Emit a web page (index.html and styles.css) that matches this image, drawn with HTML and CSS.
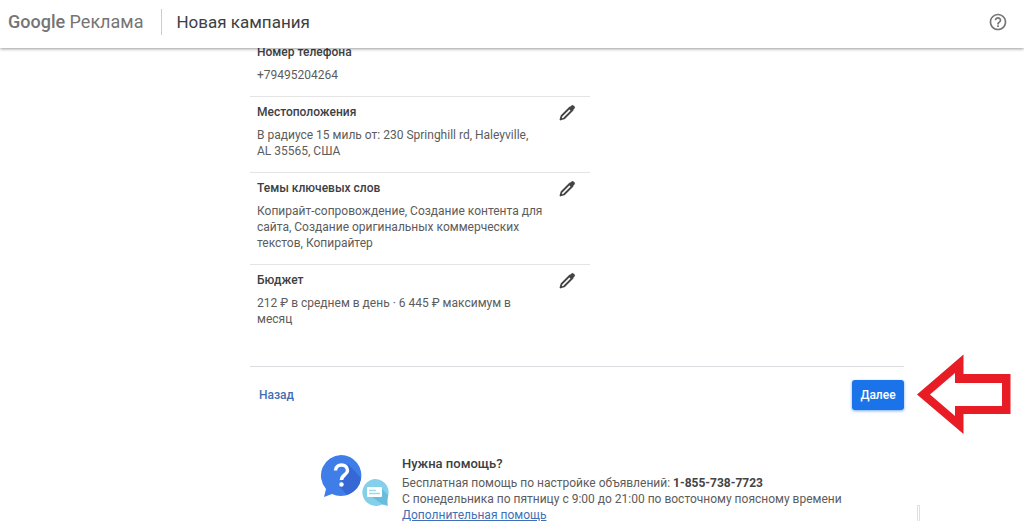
FILE: index.html
```html
<!DOCTYPE html>
<html lang="ru">
<head>
    <meta charset="UTF-8">
    <meta name="viewport" content="width=device-width, initial-scale=1.0">
    <title>Новая кампания</title>
    <link rel="stylesheet" href="styles.css">
</head>
<body>
    <header class="header">
        <a href="#" class="logo"><span class="logo-google">Google</span> Реклама</a>
        <h1 class="page-title">Новая кампания</h1>
        <button class="icon-button help-button" aria-label="Справка">
            <svg width="20" height="20" viewBox="0 0 24 24" fill="#757575"><path d="M11 18h2v-2h-2v2zm1-16C6.48 2 2 6.48 2 12s4.48 10 10 10 10-4.48 10-10S17.52 2 12 2zm0 18c-4.41 0-8-3.59-8-8s3.59-8 8-8 8 3.59 8 8-3.59 8-8 8zm0-14c-2.21 0-4 1.79-4 4h2c0-1.1.9-2 2-2s2 .9 2 2c0 2-3 1.75-3 5h2c0-2.25 3-2.5 3-5 0-2.21-1.79-4-4-4z"/></svg>
        </button>
    </header>

    <main class="main">
        <div class="summary">
            <section class="row">
                <div class="row-text">
                    <h2>Номер телефона</h2>
                    <p>+79495204264</p>
                </div>
            </section>
            <section class="row">
                <div class="row-text">
                    <h2>Местоположения</h2>
                    <p>В радиусе 15 миль от: 230 Springhill rd, Haleyville, AL 35565, США</p>
                </div>
                <button class="icon-button" aria-label="Изменить местоположения">
                    <svg width="18" height="18" viewBox="0 0 18 18"><path d="M2.500 15.500l1-3.500L12 3.500l2.500 2.500L6 14.500z" fill="none" stroke="#444" stroke-width="1.800" stroke-linejoin="round"/><path d="M10.500 4.500l3-3q1-1 2 0l1 1q1 1 0 2l-3 3z" fill="#444"/></svg>
                </button>
            </section>
            <section class="row">
                <div class="row-text">
                    <h2>Темы ключевых слов</h2>
                    <p>Копирайт-сопровождение, Создание контента для сайта, Создание оригинальных коммерческих текстов, Копирайтер</p>
                </div>
                <button class="icon-button" aria-label="Изменить темы ключевых слов">
                    <svg width="18" height="18" viewBox="0 0 18 18"><path d="M2.500 15.500l1-3.500L12 3.500l2.500 2.500L6 14.500z" fill="none" stroke="#444" stroke-width="1.800" stroke-linejoin="round"/><path d="M10.500 4.500l3-3q1-1 2 0l1 1q1 1 0 2l-3 3z" fill="#444"/></svg>
                </button>
            </section>
            <section class="row">
                <div class="row-text">
                    <h2>Бюджет</h2>
                    <p>212 ₽ в среднем в день · 6 445 ₽ максимум в месяц</p>
                </div>
                <button class="icon-button" aria-label="Изменить бюджет">
                    <svg width="18" height="18" viewBox="0 0 18 18"><path d="M2.500 15.500l1-3.500L12 3.500l2.500 2.500L6 14.500z" fill="none" stroke="#444" stroke-width="1.800" stroke-linejoin="round"/><path d="M10.500 4.500l3-3q1-1 2 0l1 1q1 1 0 2l-3 3z" fill="#444"/></svg>
                </button>
            </section>
        </div>

        <div class="actions">
            <button class="back-button">Назад</button>
            <div class="next">
                <button class="next-button">Далее</button>
                <!-- Arrow pointing at the button -->
                <svg class="arrow" width="96" height="82" viewBox="0 0 96 82"><path d="M1 40.500L47.500 0.500V20H94.500V60H47.500V80zM14 40.500L39 62V52H86V29H39V19z" fill="#e81c24" fill-rule="evenodd"/></svg>
            </div>
        </div>

        <section class="help">
            <svg class="help-icon" width="70" height="54" viewBox="0 0 70 54">
                <path d="M22 0a20.500 20.500 0 1 1-9 39L5 42l2-8A20.500 20.500 0 0 1 22 0z" transform="translate(-1 0)" fill="#3f7de8"/>
                <path d="M28 9L41 23q-1 12-14 17L20 32z" fill="#3568d4"/>
                <path d="M15.500 15.500c0-7.500 12-7.500 12 0 0 4.500-6 4.500-6 9.500" fill="none" stroke="#fff" stroke-width="3.500"/>
                <circle cx="21.500" cy="29.500" r="2.200" fill="#fff"/>
                <path d="M55 24a13.500 13.500 0 0 1 12 20l1 7-6-1.500A13.500 13.500 0 1 1 55 24z" fill="#84cfea"/>
                <path d="M61 33l7 7-1 10-5-1-10-7z" fill="#68bcdc"/>
                <rect x="47" y="32" width="15" height="10" rx="1" fill="#fff"/>
                <path d="M49 35.500h7M49 38.500h11" stroke="#9bdbea" stroke-width="1.500"/>
            </svg>
            <div class="help-text">
                <h2>Нужна помощь?</h2>
                <p>Бесплатная помощь по настройке объявлений: <strong>1-855-738-7723</strong></p>
                <p>С понедельника по пятницу с 9:00 до 21:00 по восточному поясному времени</p>
                <a href="#">Дополнительная помощь</a>
            </div>
        </section>
    </main>

    <div class="side-tab"></div>
</body>
</html>
```
FILE: styles.css
```css
* {
    box-sizing: border-box;
}

body {
    margin: 0;
    font-family: Roboto, sans-serif;
    font-size: 12px;
    line-height: 16px;
    color: #5c5c5c;
    background-color: #fff;
}

h1, h2, p {
    margin: 0;
}

button {
    border: none;
    background: none;
    padding: 0;
    font-family: inherit;
    cursor: pointer;
}

svg {
    display: block;
}

.header {
    position: sticky;
    top: 0;
    z-index: 1;
    display: flex;
    align-items: center;
    height: 48px;
    padding: 0 16px 4px 8px;
    background-color: #fff;
    box-shadow: 0 1px 3px rgba(0, 0, 0, 0.4);
}

.logo {
    padding-right: 18px;
    border-right: 1px solid #ccc;
    font-size: 18px;
    line-height: 26px;
    color: #757575;
    text-decoration: none;
}

.logo-google {
    font-weight: 500;
}

.page-title {
    margin-left: 14px;
    font-size: 17px;
    font-weight: 400;
    color: #3c4043;
}

.help-button {
    margin-left: auto;
}

.main {
    margin: -12px 120px 0 250px;
}

.summary {
    max-width: 340px;
}

.row {
    display: flex;
    justify-content: space-between;
    align-items: flex-start;
    padding: 7px 14px 13px 7px;
    border-top: 1px solid #e4e4e4;
}

.row-text {
    max-width: 288px;
}

.row h2 {
    margin-bottom: 7px;
    font-size: 12px;
    font-weight: 500;
    color: #3c4043;
}

.actions {
    display: flex;
    justify-content: space-between;
    align-items: center;
    margin-top: 26px;
    padding: 13px 0;
    border-top: 1px solid #dadce0;
}

.back-button {
    padding: 0 9px;
    font-size: 12px;
    font-weight: 500;
    color: #3f70b5;
}

.next {
    position: relative;
}

.next-button {
    width: 52px;
    height: 30px;
    border-radius: 3px;
    background-color: #1a73e8;
    box-shadow: 0 1px 3px rgba(26, 115, 232, 0.6);
    font-size: 12px;
    font-weight: 500;
    color: #fff;
}

.arrow {
    position: absolute;
    left: 64px;
    top: -26px;
}

.help {
    display: flex;
    gap: 12px;
    margin: 32px 0 0 70px;
}

.help-text {
    padding-top: 1px;
}

.help h2 {
    margin-bottom: 3px;
    font-size: 13px;
    font-weight: 500;
    color: #3c4043;
}

.help strong {
    color: #444;
}

.help a {
    color: #3f70b5;
}

.side-tab {
    position: fixed;
    bottom: 0;
    left: 917px;
    width: 3px;
    height: 16px;
    border: 1px solid #e0e0e0;
    border-bottom: none;
}
```
